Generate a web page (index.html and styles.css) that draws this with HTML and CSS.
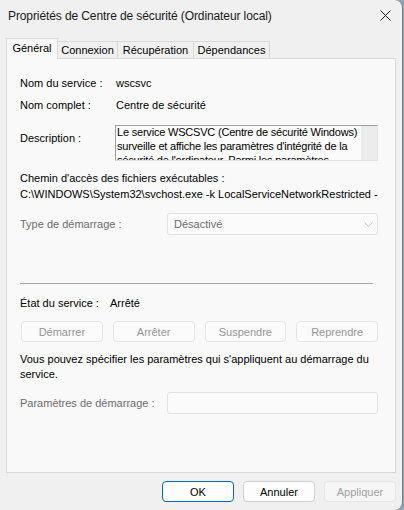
FILE: index.html
```html
<!DOCTYPE html>
<html lang="fr">
<head>
  <meta charset="UTF-8" />
  <meta name="viewport" content="width=device-width, initial-scale=1.0"/>
  <title>Propriétés de Centre de sécurité (Ordinateur local)</title>
  <link rel="stylesheet" href="styles.css">
</head>
<body>

  <div class="window">
    <header class="titlebar">
      <span class="title">Propriétés de Centre de sécurité (Ordinateur local)</span>
      <button class="close" aria-label="Fermer">
        <svg width="11" height="11" viewBox="0 0 11 11"><path d="M0.5 0.5 L10.5 10.5 M10.5 0.5 L0.5 10.5" stroke="#1b1b1b" stroke-width="1" fill="none"/></svg>
      </button>
    </header>

    <nav class="tabs">
      <a class="tab active tab-general">Général</a>
      <a class="tab tab-logon">Connexion</a>
      <a class="tab tab-recovery">Récupération</a>
      <a class="tab tab-deps">Dépendances</a>
    </nav>

    <main class="panel">
      <div class="info-row first">
        <span class="label">Nom du service :</span>
        <span>wscsvc</span>
      </div>
      <div class="info-row">
        <span class="label">Nom complet :</span>
        <span>Centre de sécurité</span>
      </div>
      <div class="info-row desc-row">
        <span class="label desc-label">Description :</span>
        <div class="desc-box">
          <div class="desc-text">Le service WSCSVC (Centre de sécurité Windows)<br>surveille et affiche les paramètres d'intégrité de la<br>sécurité de l'ordinateur. Parmi les paramètres</div>
          <div class="desc-scroll"></div>
        </div>
      </div>

      <div class="path">
        <div>Chemin d'accès des fichiers exécutables :</div>
        <div class="path-value">C:\WINDOWS\System32\svchost.exe -k LocalServiceNetworkRestricted -p</div>
      </div>

      <div class="field-row startup-type">
        <label>Type de démarrage :</label>
        <div class="select">
          <span>Désactivé</span>
          <svg width="9" height="5" viewBox="0 0 9 5"><path d="M0.5 0.5 L4.5 4.5 L8.5 0.5" stroke="#c4c4c4" stroke-width="1" fill="none"/></svg>
        </div>
      </div>

      <hr class="separator">

      <div class="info-row status">
        <span class="status-label">État du service :</span>
        <span>Arrêté</span>
      </div>

      <div class="actions">
        <button disabled>Démarrer</button>
        <button disabled>Arrêter</button>
        <button disabled>Suspendre</button>
        <button disabled>Reprendre</button>
      </div>

      <p class="hint">Vous pouvez spécifier les paramètres qui s'appliquent au démarrage du<br>service.</p>

      <div class="field-row params">
        <label>Paramètres de démarrage :</label>
        <input type="text" disabled />
      </div>
    </main>

    <footer class="footer">
      <button class="btn default">OK</button>
      <button class="btn">Annuler</button>
      <button class="btn" disabled>Appliquer</button>
    </footer>
  </div>

</body>
</html>
```

FILE: styles.css
```css
  body {
    margin: 0;
    font-family: "Liberation Sans", Arial, sans-serif;
    font-size: 11px;
    color: #000;
    background-color: #8ea4b6;
  }

  .window {
    width: 403px;
    height: 510px;
    box-sizing: border-box;
    background-color: #f0f0f0;
    border-right: 1px solid #7c7c7c;
    border-radius: 0 8px 8px 0;
    display: flex;
    flex-direction: column;
    overflow: hidden;
  }

  .titlebar {
    height: 31px;
    display: flex;
    align-items: center;
    justify-content: space-between;
    padding-left: 8px;
  }

  .title {
    font-size: 12px;
    letter-spacing: -0.1px;
    color: #1a1a1a;
  }

  .close {
    border: none;
    background: none;
    padding: 0;
    margin-right: 11px;
    width: 11px;
    height: 11px;
    display: flex;
  }

  /* tabs */
  .tabs {
    height: 27px;
    display: flex;
    align-items: flex-end;
    padding-left: 6px;
  }

  .tab {
    box-sizing: border-box;
    height: 17px;
    border: 1px solid #d9d9d9;
    border-bottom: none;
    background-color: #f0f0f0;
    display: flex;
    align-items: center;
    justify-content: center;
    margin-left: -1px;
    color: #000;
  }

  .tab.active {
    height: 21px;
    margin-left: 0;
    margin-bottom: -1px;
    background-color: #f9f9f9;
    position: relative;
    z-index: 1;
    padding-bottom: 2px;
  }

  .tab-general { width: 52px; }
  .tab-logon { width: 61px; }
  .tab-recovery { width: 77px; }
  .tab-deps { width: 77px; }

  /* main panel */
  .panel {
    box-sizing: border-box;
    width: 390px;
    height: 415px;
    margin-left: 6px;
    background-color: #f9f9f9;
    border: 1px solid #dadada;
    padding: 0 17px 0 13px;
  }

  .info-row {
    display: flex;
    line-height: 14px;
    margin-top: 8px;
  }

  .info-row.first {
    margin-top: 17px;
  }

  .label {
    width: 96px;
    flex-shrink: 0;
  }

  .desc-row {
    margin-top: 13px;
    height: 36px;
  }

  .desc-label {
    width: 95px;
    padding-top: 6px;
  }

  .desc-box {
    flex: 1;
    display: flex;
    box-sizing: border-box;
    height: 36px;
    border: 1px solid #e3e3e3;
    border-top-color: #a0a0a0;
    border-left-color: #a0a0a0;
    background-color: #fbfbfb;
    overflow: hidden;
  }

  .desc-text {
    flex: 1;
    padding-left: 1px;
    white-space: nowrap;
    overflow: hidden;
    line-height: 14px;
    letter-spacing: -0.2px;
    margin-top: -1px;
  }

  .desc-scroll {
    width: 16px;
    background-color: #ececec;
  }

  .path {
    margin-top: 9px;
    line-height: 16px;
  }

  .path-value {
    white-space: nowrap;
    overflow: hidden;
  }

  .field-row {
    display: grid;
    grid-template-columns: 147px 1fr;
    align-items: center;
    height: 22px;
  }

  .field-row label {
    color: #6d6d6d;
  }

  .startup-type {
    margin-top: 11px;
  }

  .select,
  .field-row input {
    box-sizing: border-box;
    height: 22px;
    border: 1px solid #e2e2e2;
    border-radius: 3px;
    background-color: #fbfbfb;
  }

  .select {
    display: flex;
    align-items: center;
    justify-content: space-between;
    padding: 0 4px 0 6px;
    color: #6d6d6d;
  }

  .separator {
    margin: 48px 5px 0 0;
    border: none;
    height: 1px;
    background-color: #a8a8a8;
  }

  .info-row.status {
    margin-top: 12px;
  }

  .status-label {
    width: 90px;
  }

  .actions {
    display: grid;
    grid-template-columns: repeat(4, 1fr);
    gap: 10px;
    margin: 11px 0 0 1px;
  }

  .actions button {
    height: 21px;
    font-family: inherit;
    font-size: 11px;
    color: #959595;
    background-color: #fbfbfb;
    border: 1px solid #e5e5e5;
    border-radius: 4px;
    padding: 0;
  }

  .hint {
    margin: 10px 0 0;
    line-height: 15px;
  }

  .params {
    margin-top: 10px;
  }

  .field-row input {
    width: 100%;
    font-family: inherit;
  }

  /* dialog buttons */
  .footer {
    display: flex;
    justify-content: flex-end;
    gap: 9px;
    padding: 8px 6px 0 0;
  }

  .btn {
    width: 72px;
    height: 21px;
    box-sizing: border-box;
    font-family: inherit;
    font-size: 11px;
    color: #000;
    background-color: #fdfdfd;
    border: 1px solid #d0d0d0;
    border-radius: 4px;
    padding: 0;
  }

  .btn.default {
    border-color: #0067c0;
  }

  .btn:disabled {
    color: #a0a0a0;
    background-color: #f6f6f6;
    border-color: #e5e5e5;
  }
```
